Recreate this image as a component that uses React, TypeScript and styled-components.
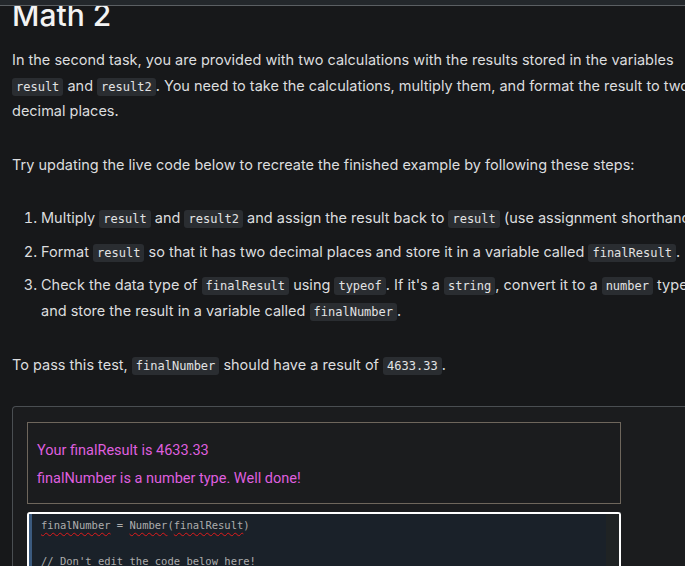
import React from "react"
import styled, { createGlobalStyle } from "styled-components"

const GlobalStyle = createGlobalStyle`
  html, body {
    margin: 0;
    padding: 0;
    background: #17181a;
    overflow: hidden;
  }
`

const Page = styled.div`
  display: flex;
  flex-direction: column;
  width: 685px;
  height: 566px;
  overflow: hidden;
  background: #17181a;
`

const TopBar = styled.div`
  flex: none;
  height: 5px;
  background: #23272b;
  border-bottom: 1px solid #5b5f63;
`

const Viewport = styled.div`
  flex: 1;
  overflow: hidden;
`

const Article = styled.article`
  width: 690px;
  padding-left: 12px;
  font-family: Inter, "Liberation Sans", sans-serif;
  font-size: 14.5px;
  line-height: 25.5px;
  color: #dcdddf;
`

// heading is scrolled partly under the top bar
const Title = styled.h1`
  margin: -9px 0 14px;
  font-size: 30px;
  line-height: 36px;
  font-weight: 500;
  color: #f3f3f3;
`

const Para = styled.p`
  margin: 0 0 28px;
`

const Steps = styled.ol`
  margin: 3px 0 29px;
  padding-left: 29px;
`

const Step = styled.li`
  margin-bottom: 8px;

  &:last-child {
    margin-bottom: 0;
  }
`

const Code = styled.code`
  font-family: "DejaVu Sans Mono", "Liberation Mono", monospace;
  font-size: 12px;
  line-height: 1;
  padding: 2px 4px;
  border-radius: 3px;
  background: #2a2d31;
  color: #e2e3e4;
`

const Example = styled.section`
  box-sizing: border-box;
  padding: 15px 14px 0;
  border: 1px solid #4a4e52;
  border-bottom: none;
  border-radius: 4px 4px 0 0;
  background: #1b1c1e;
  height: 200px;
`

const ResultBox = styled.div`
  box-sizing: border-box;
  width: 594px;
  display: flex;
  flex-direction: column;
  gap: 10px;
  padding: 19px 9px 15px;
  border: 1px solid #6e665c;
`

const ResultLine = styled.p`
  margin: 0;
  font-family: Roboto, "Liberation Sans", sans-serif;
  font-size: 14.5px;
  line-height: 18px;
  color: #df5fdf;
`

const Editor = styled.div`
  box-sizing: border-box;
  width: 594px;
  height: 80px;
  margin-top: 8px;
  display: flex;
  border: 2px solid #ffffff;
  border-bottom: none;
  border-radius: 3px 3px 0 0;
  background: #1a2129;
`

const Gutter = styled.div`
  flex: none;
  width: 3px;
  background: #3b5a7e;
`

const CodeArea = styled.pre`
  flex: 1;
  margin: 0;
  padding: 2px 9px;
  font-family: "DejaVu Sans Mono", "Liberation Mono", monospace;
  font-size: 10.5px;
  line-height: 18px;
  color: #adadad;
`

const Squiggle = styled.span`
  text-decoration: underline wavy #e01b1b;
  text-decoration-thickness: 1px;
  text-underline-offset: 3px;
`

const ScrollTrack = styled.div`
  flex: none;
  width: 13px;
  background: #1f2324;
`

export default function App() {
  return (
    <>
      <GlobalStyle />
      <Page>
        <TopBar />
        <Viewport>
          <Article>
            <Title>Math 2</Title>
            <Para>
              In the second task, you are provided with two calculations with
              the results stored in the variables <Code>result</Code> and{" "}
              <Code>result2</Code>. You need to take the calculations, multiply
              them, and format the result to two decimal places.
            </Para>
            <Para>
              Try updating the live code below to recreate the finished example
              by following these steps:
            </Para>
            <Steps>
              <Step>
                Multiply <Code>result</Code> and <Code>result2</Code> and assign
                the result back to <Code>result</Code> (use assignment
                shorthand).
              </Step>
              <Step>
                Format <Code>result</Code> so that it has two decimal places and
                store it in a variable called <Code>finalResult</Code>.
              </Step>
              <Step>
                Check the data type of <Code>finalResult</Code> using{" "}
                <Code>typeof</Code>. If it's a <Code>string</Code>, convert it
                to a <Code>number</Code> type and store the result in a variable
                called <Code>finalNumber</Code>.
              </Step>
            </Steps>
            <Para>
              To pass this test, <Code>finalNumber</Code> should have a result
              of <Code>4633.33</Code>.
            </Para>
            <Example>
              <ResultBox>
                <ResultLine>Your finalResult is 4633.33</ResultLine>
                <ResultLine>finalNumber is a number type. Well done!</ResultLine>
              </ResultBox>
              <Editor>
                <Gutter />
                <CodeArea>
                  <Squiggle>finalNumber</Squiggle> = <Squiggle>Number</Squiggle>(
                  <Squiggle>finalResult</Squiggle>)
                  {"\n\n"}// Don't edit the code below here!
                </CodeArea>
                <ScrollTrack />
              </Editor>
            </Example>
          </Article>
        </Viewport>
      </Page>
    </>
  )
}
